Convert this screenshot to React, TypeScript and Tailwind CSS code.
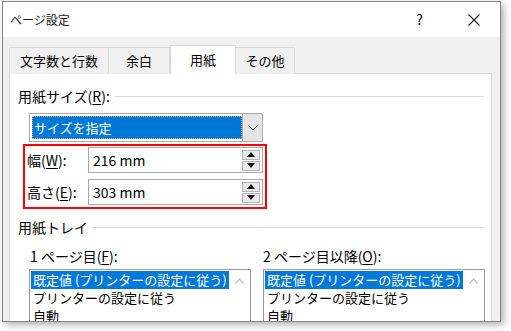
import { ReactNode } from "react";

const jp = { fontFamily: '"Noto Sans CJK JP", "Noto Sans", sans-serif' };

function Key({ k }: { k: string }) {
  return <span className="underline underline-offset-2">{k}</span>;
}

function Spinner() {
  return (
    <div className="flex flex-col gap-[1px] mr-[2px]">
      {["up", "down"].map((d) => (
        <div
          key={d}
          className="w-[18px] h-[10px] bg-[#eaeaea] border border-[#b5b5b5] flex items-center justify-center"
        >
          <svg width="8" height="5" viewBox="0 0 8 5">
            {d === "up" ? <path d="M0 5 L4 0 L8 5 Z" fill="#111" /> : <path d="M0 0 L4 5 L8 0 Z" fill="#111" />}
          </svg>
        </div>
      ))}
    </div>
  );
}

function SizeRow({ label, value }: { label: ReactNode; value: string }) {
  return (
    <div className="flex items-center h-[26px]">
      <div className="w-[63px] pl-[2px] text-[14px]">{label}</div>
      <div className="flex-1 h-full border border-[#a9a9a9] bg-white flex items-center justify-between">
        <span className="pl-[4px] text-[14px]">{value}</span>
        <Spinner />
      </div>
    </div>
  );
}

function ListBox() {
  const items = ["既定値 (プリンターの設定に従う)", "プリンターの設定に従う", "自動"];
  return (
    <div className="w-[222px] h-[70px] border border-[#9a9a9a] bg-white flex p-[1px]">
      <div className="flex-1 text-[13px] leading-[18px]">
        {items.map((t, i) => (
          <div key={t} className={i === 0 ? "bg-[#0078d7] text-white pl-[2px]" : "pl-[2px]"}>
            {t}
          </div>
        ))}
      </div>
      <div className="w-[20px] flex justify-center pt-[7px]">
        <svg width="9" height="6" viewBox="0 0 9 6">
          <path d="M0.5 5.5 L4.5 1 L8.5 5.5" stroke="#c2c2c2" strokeWidth="1.3" fill="none" />
        </svg>
      </div>
    </div>
  );
}

function SectionHead({ children }: { children: ReactNode }) {
  return (
    <div className="flex items-center h-[20px] pl-[8px] pr-[7px] text-[14px]">
      <span>{children}</span>
      <div className="flex-1 h-px bg-[#dcdcdc] ml-[5px]" />
    </div>
  );
}

export default function App() {
  const tabs = [
    { label: "文字数と行数", w: "w-[100px]" },
    { label: "余白", w: "w-[62px]" },
    { label: "用紙", w: "w-[66px]", active: true },
    { label: "その他", w: "w-[60px]" },
  ];

  return (
    <div className="w-[511px] h-[331px] bg-white overflow-hidden text-black" style={jp}>
      <div className="ml-[2px] mt-[1px] w-[499px] h-[321px] border border-[#858585] flex flex-col shadow-[3px_3px_7px_rgba(0,0,0,0.3)] overflow-hidden">
        {/* title bar */}
        <div className="h-[35px] bg-white flex items-center shrink-0">
          <span className="pl-[7px] text-[12px] text-[#1a1a1a]">ページ設定</span>
          <span className="ml-auto text-[14px] mr-[45px]">?</span>
          <svg width="12" height="12" viewBox="0 0 12 12" className="mr-[20px]">
            <path d="M0.5 0.5 L11.5 11.5 M11.5 0.5 L0.5 11.5" stroke="#222" strokeWidth="1.1" />
          </svg>
        </div>

        {/* body */}
        <div className="flex-1 bg-[#f0f0f0] flex flex-col pt-[8px] min-h-0">
          <div className="flex items-end h-[29px] ml-[6px] shrink-0 relative z-10">
            {tabs.map((t) =>
              t.active ? (
                <div
                  key={t.label}
                  className={`${t.w} h-[29px] bg-white border border-b-0 border-[#d9d9d9] flex items-center justify-center text-[13px] pb-[1px]`}
                >
                  {t.label}
                </div>
              ) : (
                <div
                  key={t.label}
                  className={`${t.w} h-[27px] bg-[#f0f0f0] border border-[#d9d9d9] border-b-0 -ml-px first:ml-0 flex items-center justify-center text-[13px]`}
                >
                  {t.label}
                </div>
              )
            )}
          </div>

          <div className="flex-1 ml-[6px] mr-[8px] -mt-px bg-white border border-[#d9d9d9] flex flex-col">
            <div className="mt-[12px]">
              <SectionHead>
                用紙サイズ(<Key k="R" />):
              </SectionHead>
            </div>

            {/* paper size combo */}
            <div className="ml-[19px] mt-[7px] w-[234px] h-[29px] border border-[#adadad] bg-white flex p-[2px]">
              <div className="flex-1 bg-[#0078d7] border border-dotted border-[#d9a860] text-white text-[13px] flex items-center pl-[1px]">
                サイズを指定
              </div>
              <div className="w-[20px] -my-[2px] -mr-[2px] bg-[#e5e5e5] border-l border-[#adadad] flex items-center justify-center">
                <svg width="10" height="6" viewBox="0 0 10 6">
                  <path d="M0.5 0.5 L5 5 L9.5 0.5" stroke="#555" strokeWidth="1" fill="none" />
                </svg>
              </div>
            </div>

            {/* width / height, highlighted */}
            <div className="ml-[13px] mt-[2px] w-[244px] h-[65px] border-2 border-[#ff0000] px-[0px] pr-[2px] pt-[1px] flex flex-col gap-[6px]">
              <SizeRow
                label={
                  <>
                    幅(<Key k="W" />):
                  </>
                }
                value="216 mm"
              />
              <SizeRow
                label={
                  <>
                    高さ(<Key k="E" />):
                  </>
                }
                value="303 mm"
              />
            </div>

            <div className="mt-[8px]">
              <SectionHead>用紙トレイ</SectionHead>
            </div>

            <div className="flex mt-[9px] ml-[19px] gap-[12px]">
              <div className="flex flex-col">
                <div className="h-[20px] pl-[1px] text-[14px] flex items-center">
                  1 ページ目(<Key k="F" />):
                </div>
                <div className="mt-[3px]">
                  <ListBox />
                </div>
              </div>
              <div className="flex flex-col">
                <div className="h-[20px] text-[14px] flex items-center">
                  2 ページ目以降(<Key k="O" />):
                </div>
                <div className="mt-[3px]">
                  <ListBox />
                </div>
              </div>
            </div>
          </div>
        </div>
      </div>
    </div>
  );
}
